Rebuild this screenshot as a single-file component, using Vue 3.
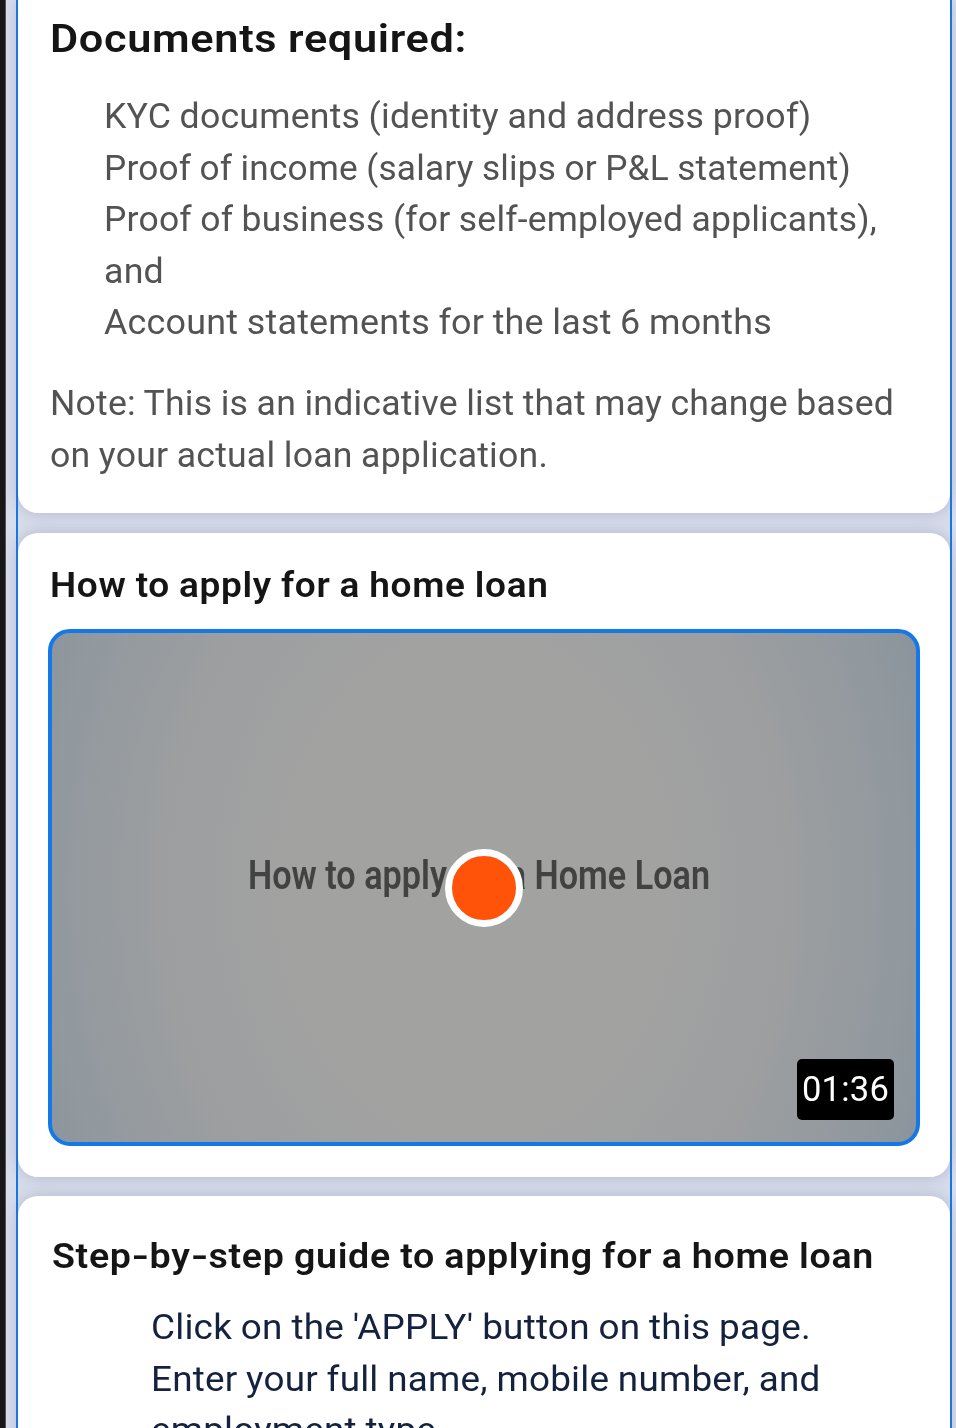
<script setup>
const documents = [
  { text: 'KYC documents (identity and address proof)', width: 707.5 },
  { text: 'Proof of income (salary slips or P&L statement)', width: 747 },
  { text: 'Proof of business (for self-employed applicants),', width: 773 },
  { text: 'and', width: 60 },
  { text: 'Account statements for the last 6 months', width: 668 },
]

const note = [
  { text: 'Note: This is an indicative list that may change based', width: 844 },
  { text: 'on your actual loan application.', width: 498 },
]

const steps = [
  { text: "Click on the 'APPLY' button on this page.", width: 660 },
  { text: 'Enter your full name, mobile number, and', width: 669.5 },
  { text: 'employment type', width: 285 },
]

// Widens a line of text so that it spans the given width.
const vFit = {
  mounted(el, { value }) {
    el.style.transform = `scaleX(${value / el.getBoundingClientRect().width})`
  },
}
</script>

<template>
  <div class="screen">
    <div class="bezel"></div>
    <main class="page">
      <section class="card documents">
        <h1><span v-fit="417" class="fit">Documents required:</span></h1>
        <ul class="lines">
          <li v-for="l in documents" :key="l.text"><span v-fit="l.width" class="fit">{{ l.text }}</span></li>
        </ul>
        <p class="lines note">
          <span v-for="l in note" :key="l.text" class="row"><span v-fit="l.width" class="fit">{{ l.text }}</span></span>
        </p>
      </section>

      <section class="card video">
        <h2><span v-fit="498.5" class="fit">How to apply for a home loan</span></h2>
        <div class="thumb">
          <svg class="caption" width="472" height="50" viewBox="0 0 472 50">
            <text x="4" y="38" textLength="462" lengthAdjust="spacingAndGlyphs">How to apply for a Home Loan</text>
          </svg>
          <span class="play"></span>
          <span class="time"><span v-fit="87" class="fit">01:36</span></span>
        </div>
      </section>

      <section class="card guide">
        <h2><span v-fit="822" class="fit">Step<span class="dash">-</span>by<span class="dash">-</span>step guide to applying for a home loan</span></h2>
        <ol class="lines">
          <li v-for="l in steps" :key="l.text"><span v-fit="l.width" class="fit">{{ l.text }}</span></li>
        </ol>
      </section>
    </main>
  </div>
</template>

<style>
body {
  margin: 0;
  overflow: hidden;
}
</style>

<style scoped>
.screen {
  display: flex;
  box-sizing: border-box;
  width: 956px;
  height: 1428px;
  overflow: hidden;
  background: #d9deec;
  font-family: Roboto, "Noto Sans", sans-serif;
  font-size: 34.4px;
  white-space: nowrap;
}
.fit {
  display: inline-block;
  transform-origin: 0 50%;
  word-spacing: -0.6px;
  letter-spacing: 0.2px;
}
.bezel {
  flex: none;
  width: 5px;
  border-right: 1px solid #55565a;
  background: #181818;
}
.page {
  flex: none;
  box-sizing: border-box;
  width: 936px;
  height: 1428px;
  margin-left: 10px;
  border: solid #1478e8;
  border-width: 0 2px;
  display: flex;
  flex-direction: column;
  gap: 19.5px;
}
.card {
  flex: none;
  box-sizing: border-box;
  background: #fff;
  border-radius: 20px;
  box-shadow: 0 0 16px rgba(95, 105, 140, 0.34);
}
h1,
h2,
ul,
ol,
p {
  margin: 0;
  padding: 0;
  list-style: none;
}
h1,
h2 {
  color: #151515;
  font-weight: 600;
}
h1 {
  font-size: 38.5px;
  line-height: 52px;
}
h2 {
  font-size: 34.4px;
  line-height: 50px;
}
h1 .fit,
h2 .fit {
  letter-spacing: 0.6px;
}
.dash {
  display: inline-block;
  transform: scaleX(1.25);
  padding: 0 1.6px;
}
.lines {
  color: #535353;
  line-height: 51.6px;
}
.row {
  display: block;
}
.documents {
  height: 513px;
  padding: 13px 0 0 32px;
  border-radius: 0 0 20px 20px;
}
.documents ul {
  padding: 26px 0 0 54px;
}
.note {
  padding-top: 29.5px;
}
.video {
  height: 644px;
  padding: 27px 30px 0;
}
.video h2 {
  padding-left: 2px;
}
.thumb {
  position: relative;
  box-sizing: border-box;
  width: 872px;
  height: 517px;
  margin-top: 19px;
  border: 4px solid #1478e8;
  border-radius: 22px;
  background:
    radial-gradient(ellipse 510px 660px at 49% 50%, #a2a2a1 36%, #9c9ea0 62%, #90989e 86%, #87919b 100%);
}
.caption {
  position: absolute;
  left: 192px;
  top: 218px;
  font-size: 41px;
  font-weight: 600;
  fill: #424242;
  filter: blur(0.7px);
}
.play {
  position: absolute;
  left: 393px;
  top: 216px;
  box-sizing: border-box;
  width: 78px;
  height: 78px;
  border: 7px solid #fff;
  border-radius: 50%;
  background: #ff530a;
}
.time {
  position: absolute;
  left: 745px;
  top: 426px;
  box-sizing: border-box;
  width: 97px;
  height: 61px;
  padding-left: 5px;
  border-radius: 5px;
  background: #000;
  color: #fff;
  line-height: 60px;
}
.guide {
  height: 300px;
  padding: 35px 0 0 33.5px;
}
.guide ol {
  padding: 21px 0 0 99px;
  color: #14213f;
}
</style>
